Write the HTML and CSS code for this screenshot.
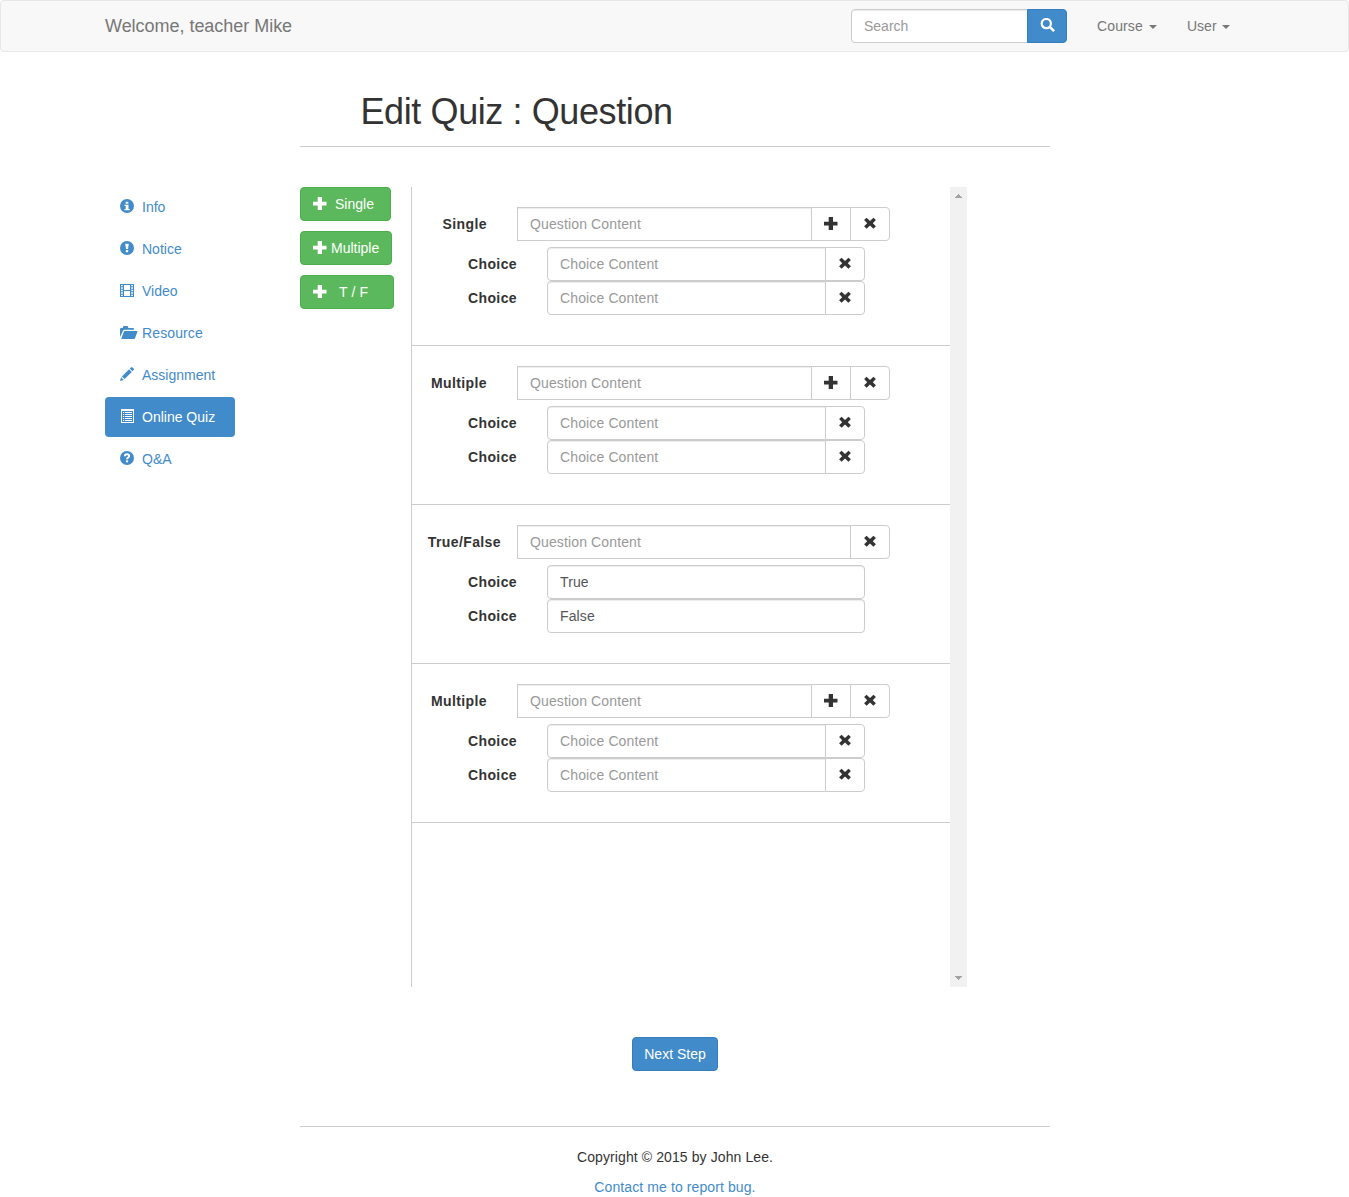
FILE: index.html
```html
<!DOCTYPE html>
<html lang="en">
<head>
<meta charset="utf-8">
<title>Edit Quiz : Question</title>
<link rel="stylesheet" href="styles.css">
</head>
<body>
<svg class="sprite" aria-hidden="true">
  <symbol id="plus" viewBox="0 0 14 14"><path d="M4.700 0H9v4.800h4.500v3.800H9V13H4.700V8.600H0V4.800h4.700z"/></symbol>
  <symbol id="remove" viewBox="0 0 14 14"><path d="M3.600.7 7 4l3.400-3.300 2.500 2.400L9.800 6.200l3.100 3.100-2.500 2.400L7 8.500l-3.400 3.200-2.500-2.400 3.100-3.100-3.100-3.100z"/></symbol>
  <symbol id="search" viewBox="0 0 16 14"><circle cx="6.300" cy="5.600" r="4.600" fill="none" stroke="currentColor" stroke-width="2.200"/><path d="M8.800 9.700 10.600 8l4.400 4.200-1.800 1.800z"/></symbol>
  <symbol id="info" viewBox="0 0 14 14"><path fill-rule="evenodd" d="M7 0a7 7 0 1 1 0 14A7 7 0 0 1 7 0zM5.700 2.800v2h2.600v-2zM4.500 5.700v1.300h1.200v3H4.500v1.300h5.200V10H8.500V5.700z"/></symbol>
  <symbol id="notice" viewBox="0 0 14 14"><path fill-rule="evenodd" d="M7 0a7 7 0 1 1 0 14A7 7 0 0 1 7 0zM5.200 2.800 6 8.100h2l.8-5.300zM5.800 9v2.300h2.400V9z"/></symbol>
  <symbol id="film" viewBox="0 0 14 14"><path fill-rule="evenodd" d="M0 1h14v13H0zM1 2v1.300h1.800V2zM1 4.200v1.600h1.800V4.200zM1 6.700v1.600h1.800V6.700zM1 9.200v1.600h1.800V9.200zM1 11.700V13h1.800v-1.300zM4 2v5h6V2zM4 8v5h6V8zM11.200 2v1.300H13V2zM11.200 4.200v1.600H13V4.200zM11.200 6.700v1.600H13V6.700zM11.200 9.200v1.600H13V9.200zM11.200 11.700V13H13v-1.300z"/></symbol>
  <symbol id="folder" viewBox="0 0 18 14"><path transform="translate(0 1)" d="M0 11V3.300Q0 2 1.200 2h1.500L3.200.6Q3.400 0 4 0h3.200q.6 0 .8.600L8.300 2H13q1 0 1 1.200v.6H4.700q-1.200 0-1.700 1zM4.800 5h12.100q.8 0 .5.800l-2.400 6.400q-.3.800-1 .8H1.200l2.600-7.300q.3-.7 1-.7z"/></symbol>
  <symbol id="pencil" viewBox="0 0 14 14"><path d="M0 14l1.100-3.800 2.700 2.700zM1.900 9.400l7.200-7.200 2.700 2.700-7.200 7.200zM9.800 1.500 11 .4q.7-.7 1.400 0l1.200 1.200q.7.700 0 1.400l-1.100 1.200z"/></symbol>
  <symbol id="list" viewBox="0 0 14 14"><path fill-rule="evenodd" d="M1 0h13v14H1zM2 2v11h11V2zM3 3h1.200v1H3zM5 3h7v1H5zM3 5h1.200v1H3zM5 5h7v1H5zM3 7h1.200v1H3zM5 7h7v1H5zM3 9h1.200v1H3zM5 9h7v1H5zM3 11h1.200v1H3zM5 11h7v1H5z"/></symbol>
  <symbol id="question" viewBox="0 0 14 14"><circle cx="7" cy="7" r="7"/><path d="M4.800 5.300Q4.800 3.200 7 3.200t2.200 1.700Q9.200 6 8 6.600q-1 .5-1 1.700" fill="none" stroke="#fff" stroke-width="1.900"/><path d="M5.900 9.300h2.200v2H5.900z" fill="#fff"/></symbol>
</svg>

<nav class="navbar">
  <div class="navbar-inner">
    <a class="brand">Welcome, teacher Mike</a>
    <form class="search">
      <input class="control search-input" type="text" placeholder="Search">
      <button class="search-button" type="button" aria-label="Search"><svg class="icon icon-search"><use href="#search"/></svg></button>
    </form>
    <a class="nav-link">Course<span class="caret"></span></a>
    <a class="nav-link nav-user">User<span class="caret"></span></a>
  </div>
</nav>

<header class="page-title"><h1>Edit Quiz : Question</h1></header>

<main class="content">
  <ul class="side-nav">
    <li><svg class="icon"><use href="#info"/></svg><span>Info</span></li>
    <li><svg class="icon"><use href="#notice"/></svg><span>Notice</span></li>
    <li><svg class="icon"><use href="#film"/></svg><span>Video</span></li>
    <li><svg class="icon icon-folder"><use href="#folder"/></svg><span class="wide">Resource</span></li>
    <li><svg class="icon"><use href="#pencil"/></svg><span>Assignment</span></li>
    <li class="active"><svg class="icon"><use href="#list"/></svg><span>Online Quiz</span></li>
    <li><svg class="icon"><use href="#question"/></svg><span>Q&amp;A</span></li>
  </ul>

  <div class="add-buttons">
    <button class="add add-single" type="button"><svg class="icon"><use href="#plus"/></svg><span>Single</span></button>
    <button class="add add-multiple" type="button"><svg class="icon"><use href="#plus"/></svg><span>Multiple</span></button>
    <button class="add add-tf" type="button"><svg class="icon"><use href="#plus"/></svg><span>T / F</span></button>
  </div>

  <div class="panel">
    <div class="questions">
      <section class="question">
        <div class="row"><label>Single</label><input class="control" placeholder="Question Content"><button class="tool" type="button"><svg class="icon"><use href="#plus"/></svg></button><button class="tool" type="button"><svg class="icon"><use href="#remove"/></svg></button></div>
        <div class="row choice first"><label>Choice</label><input class="control" placeholder="Choice Content"><button class="tool" type="button"><svg class="icon"><use href="#remove"/></svg></button></div>
        <div class="row choice"><label>Choice</label><input class="control" placeholder="Choice Content"><button class="tool" type="button"><svg class="icon"><use href="#remove"/></svg></button></div>
      </section>
      <section class="question">
        <div class="row"><label>Multiple</label><input class="control" placeholder="Question Content"><button class="tool" type="button"><svg class="icon"><use href="#plus"/></svg></button><button class="tool" type="button"><svg class="icon"><use href="#remove"/></svg></button></div>
        <div class="row choice first"><label>Choice</label><input class="control" placeholder="Choice Content"><button class="tool" type="button"><svg class="icon"><use href="#remove"/></svg></button></div>
        <div class="row choice"><label>Choice</label><input class="control" placeholder="Choice Content"><button class="tool" type="button"><svg class="icon"><use href="#remove"/></svg></button></div>
      </section>
      <section class="question">
        <div class="row"><label class="label-tf">True/False</label><input class="control" placeholder="Question Content"><button class="tool" type="button"><svg class="icon"><use href="#remove"/></svg></button></div>
        <div class="row choice first"><label>Choice</label><input class="control" value="True"></div>
        <div class="row choice"><label>Choice</label><input class="control" value="False"></div>
      </section>
      <section class="question">
        <div class="row"><label>Multiple</label><input class="control" placeholder="Question Content"><button class="tool" type="button"><svg class="icon"><use href="#plus"/></svg></button><button class="tool" type="button"><svg class="icon"><use href="#remove"/></svg></button></div>
        <div class="row choice first"><label>Choice</label><input class="control" placeholder="Choice Content"><button class="tool" type="button"><svg class="icon"><use href="#remove"/></svg></button></div>
        <div class="row choice"><label>Choice</label><input class="control" placeholder="Choice Content"><button class="tool" type="button"><svg class="icon"><use href="#remove"/></svg></button></div>
      </section>
    </div>
    <div class="scrollbar">
      <svg class="arrow" viewBox="0 0 7 4"><path d="M3 0h1v1h1v1h1v1h1v1H0V3h1V2h1V1h1z"/></svg>
      <svg class="arrow" viewBox="0 0 7 4"><path d="M0 0h7v1H6v1H5v1H4v1H3V3H2V2H1V1H0z"/></svg>
    </div>
  </div>
</main>

<div class="actions"><button class="next" type="button">Next Step</button></div>

<footer class="footer">
  <p>Copyright © 2015 by John Lee.</p>
  <p><a>Contact me to report bug.</a></p>
</footer>
</body>
</html>
```
FILE: styles.css
```css
* { box-sizing: border-box; }
body {
  margin: 0;
  height: 1197px;
  overflow: hidden;
  background: #fff;
  color: #333;
  font: 14px/20px "Liberation Sans", Arial, sans-serif;
}
button, input { font: inherit; margin: 0; }
.sprite { display: none; }
.icon { display: block; flex: none; width: 14px; height: 14px; fill: currentColor; }

.navbar { height: 52px; border: 1px solid #e7e7e7; border-radius: 4px; background: #f8f8f8; color: #777; }
.navbar-inner { display: flex; align-items: center; height: 50px; padding: 0 104px; }
.brand { font-size: 18px; letter-spacing: -.03px; margin-right: auto; }
.search { display: flex; width: 216px; margin-right: 30px; }
.control {
  flex: 1;
  min-width: 0;
  height: 34px;
  padding: 6px 12px;
  border: 1px solid #ccc;
  border-radius: 4px;
  background: #fff;
  box-shadow: inset 0 1px 1px rgba(0, 0, 0, .075);
  color: #555;
  outline: 0;
}
.control::placeholder { color: #999; opacity: 1; }
.search-input { border-radius: 4px 0 0 4px; }
.search-button {
  width: 40px;
  height: 34px;
  margin-left: -1px;
  padding: 0 0 3px 12px;
  border: 1px solid #357ebd;
  border-radius: 0 4px 4px 0;
  background: #428bca;
  color: #fff;
}
.icon-search { width: 16px; }
.nav-link { display: flex; align-items: center; justify-content: space-between; width: 60px; letter-spacing: .12px; }
.nav-user { width: 43px; margin: 0 14px 0 30px; letter-spacing: 0; }
.caret { border-top: 4px solid; border-left: 4px solid transparent; border-right: 4px solid transparent; margin-top: 2px; }

.page-title { width: 750px; height: 95px; margin-left: 300px; padding: 40px 0 0 60.5px; border-bottom: 1px solid #ccc; }
h1 { margin: 0; font-size: 36px; font-weight: 400; line-height: 40px; letter-spacing: -.4px; }

.content { display: flex; align-items: flex-start; margin-top: 40px; padding-left: 105px; }
.side-nav { display: flex; flex-direction: column; gap: 2px; width: 130px; margin: 0 65px 0 0; padding: 0; list-style: none; color: #428bca; }
.side-nav li { display: flex; align-items: flex-start; height: 40px; padding: 12px 0 0 15px; border-radius: 4px; }
.side-nav span { margin: -2px 0 0 8px; }
.side-nav .wide { letter-spacing: .12px; }
.side-nav .icon-folder { width: 18px; margin-right: -4px; }
.side-nav .active { background: #428bca; color: #fff; }

.add-buttons { display: flex; flex-direction: column; gap: 10px; width: 111px; }
.add { display: flex; align-items: center; height: 34px; padding: 0 0 0 12px; border: 1px solid #4cae4c; border-radius: 4px; background: #5cb85c; color: #fff; }
.add-single { width: 91px; gap: 8px; }
.add-multiple { width: 92px; gap: 4px; }
.add-tf { width: 94px; gap: 12px; }
.add-tf span { letter-spacing: .15px; }

.panel { display: flex; width: 556px; height: 800px; border-left: 1px solid #ccc; }
.questions { flex: 1; }
.question { height: 159px; padding-top: 20px; border-bottom: 1px solid #ccc; }
.row { display: flex; align-items: center; width: 478px; }
.row label { width: 105px; padding-right: 30px; text-align: right; font-weight: 700; letter-spacing: .4px; white-space: nowrap; }
.row .label-tf { padding-right: 16px; }
.row .control { border-radius: 0; letter-spacing: .13px; }
.row.choice { width: 453px; }
.row.choice label { width: 135px; }
.row.choice .control { border-radius: 4px; }
.row.choice .control:not(:last-child) { border-radius: 4px 0 0 4px; }
.first { margin-top: 6px; }
.tool {
  display: flex;
  justify-content: center;
  width: 40px;
  height: 34px;
  margin-left: -1px;
  padding: 9px 0 0;
  border: 1px solid #ccc;
  background: #fff;
  color: #333;
}
.tool:last-child { border-radius: 0 4px 4px 0; }

.scrollbar { display: flex; flex-direction: column; align-items: center; justify-content: space-between; width: 17px; padding: 7px 0; background: #f1f1f1; }
.arrow { width: 7px; height: 4px; fill: #a3a3a3; }

.actions { display: flex; justify-content: center; margin-top: 50px; }
.next { width: 86px; height: 34px; padding: 0 0 0 1px; border: 1px solid #357ebd; border-radius: 4px; background: #428bca; color: #fff; }
.footer { width: 750px; margin: 55px 0 0 300px; padding-top: 20px; border-top: 1px solid #ccc; text-align: center; }
.footer p { margin: 0 0 10px; letter-spacing: .1px; }
.footer a { color: #428bca; }
```
